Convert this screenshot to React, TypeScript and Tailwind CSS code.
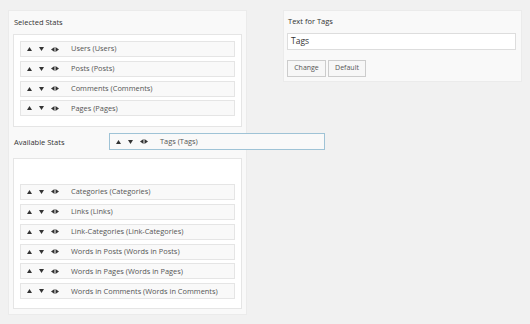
import React from "react";

const SELECTED = ["Users (Users)", "Posts (Posts)", "Comments (Comments)", "Pages (Pages)"];
const AVAILABLE = [
  "Categories (Categories)",
  "Links (Links)",
  "Link-Categories (Link-Categories)",
  "Words in Posts (Words in Posts)",
  "Words in Pages (Words in Pages)",
  "Words in Comments (Words in Comments)",
];

function Arrows() {
  return (
    <div className="flex items-center shrink-0 pl-[6px] pr-[12px]">
      <svg width="5" height="4" viewBox="0 0 5 4">
        <path d="M2.5 0 L5 4 L0 4 Z" fill="#333" />
      </svg>
      <svg width="5" height="4" viewBox="0 0 5 4" className="ml-[7px]">
        <path d="M0 0 L5 0 L2.5 4 Z" fill="#333" />
      </svg>
      <svg width="8" height="5" viewBox="0 0 8 5" className="ml-[7px]">
        <path d="M0 2.5 L3.5 0 L3.5 5 Z" fill="#333" />
        <path d="M4.5 0 L8 2.5 L4.5 5 Z" fill="#333" />
      </svg>
    </div>
  );
}

function StatRow({ label, gap }: { label: string; gap: string }) {
  return (
    <div className={`flex items-center h-[16px] ${gap} bg-[#f9f9f9] border border-[#e5e5e5] text-[7.4px] text-[#555]`}>
      <Arrows />
      <span>{label}</span>
    </div>
  );
}

export default function App() {
  return (
    <div
      className="relative w-[530px] h-[324px] bg-[#f1f1f1] flex items-start pt-[10px] pl-[8px]"
      style={{ fontFamily: "'Open Sans', 'Liberation Sans', sans-serif" }}
    >
      {/* Left column */}
      <div className="w-[239px] bg-[#f9f9f9] border border-[#ebebeb] px-[4px] pb-[5px]">
        <div className="h-[23px] flex items-center text-[7.5px] text-[#333] pl-[1px]">Selected Stats</div>
        <div className="bg-white border border-[#e5e5e5] px-[6px] pt-[6px] pb-[6px]">
          {SELECTED.map(s => <StatRow key={s} label={s} gap="mb-[3.75px]" />)}
        </div>
        <div className="h-[31px] flex items-center text-[7.5px] text-[#333] pl-[1px]">Available Stats</div>
        <div className="bg-white border border-[#e5e5e5] px-[6px] pt-[6px] pb-[5px]">
          <div className="h-[15px] mb-[3.9px]" />
          {AVAILABLE.map(s => <StatRow key={s} label={s} gap="mb-[3.9px]" />)}
        </div>
      </div>

      {/* Right panel */}
      <div className="ml-[36px] w-[239px] bg-[#f9f9f9] border border-[#ebebeb] px-[3px] pb-[4px]">
        <div className="h-[22px] flex items-center text-[7.5px] text-[#333] pl-[1px]">Text for Tags</div>
        <div className="h-[17px] bg-white border border-[#ddd] flex items-center pl-[3px] text-[8.5px] text-[#333] mr-[2px]">
          Tags
        </div>
        <div className="flex gap-[2px] mt-[10px]">
          <button className="h-[17px] w-[39px] bg-[#f7f7f7] border border-[#ccc] text-[7px] text-[#555]">Change</button>
          <button className="h-[17px] w-[38px] bg-[#f7f7f7] border border-[#ccc] text-[7px] text-[#555]">Default</button>
        </div>
      </div>

      {/* dragged item */}
      <div className="absolute left-[109px] top-[133px] w-[216px] h-[17px] bg-[#f9f9f9] border border-[#9fc3d6] flex items-center text-[7.4px] text-[#555]">
        <Arrows />
        <span>Tags (Tags)</span>
      </div>
    </div>
  );
}
